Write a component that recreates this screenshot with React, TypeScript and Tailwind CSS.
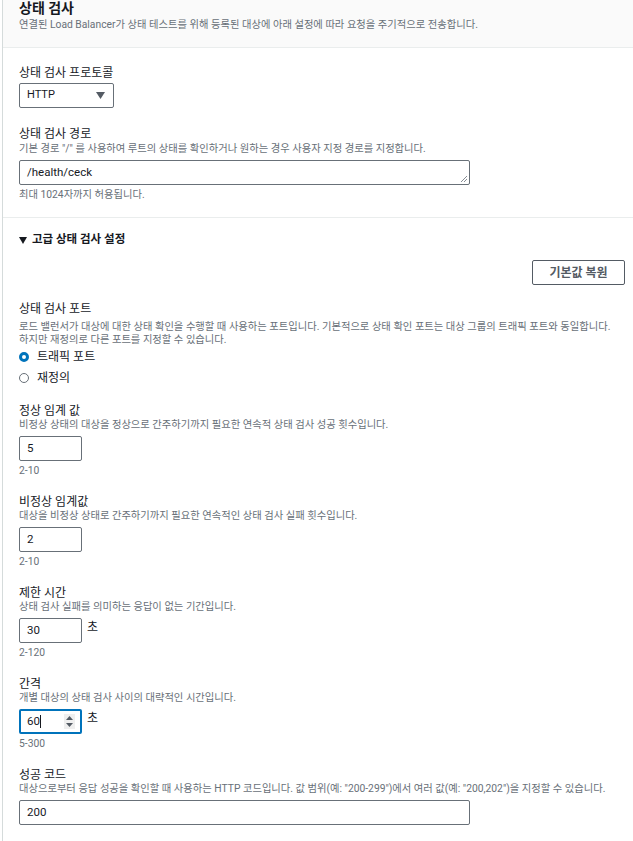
import React from 'react';

// ── 공통 스타일 ───────────────────────────────────────────────────────────────

const label = 'text-[12px] leading-[14px] text-[#16191f]';
const desc = 'text-[10.3px] leading-[13px] text-[#687078]';
const box = 'h-[25px] border border-[#687078] rounded-[2px] flex items-center px-[7px] text-[11.5px] text-[#16191f] bg-white';

function Field({
  title,
  help,
  hint,
  children,
  className = '',
}: {
  title: string;
  help: string;
  hint?: string;
  children: React.ReactNode;
  className?: string;
}) {
  return (
    <div className={className}>
      <p className={label}>{title}</p>
      <p className={desc}>{help}</p>
      <div className="mt-[5px] flex items-start gap-[5px]">{children}</div>
      {hint && <p className={`${desc} mt-[3px]`}>{hint}</p>}
    </div>
  );
}

function Radio({ checked, text }: { checked?: boolean; text: string }) {
  return (
    <div className="flex items-center h-[18px] gap-[8px]">
      {checked ? (
        <span className="w-[10px] h-[10px] rounded-full border-[3px] border-[#0073bb] bg-white" />
      ) : (
        <span className="w-[10px] h-[10px] rounded-full border border-[#687078] bg-white" />
      )}
      <span className="text-[12px] text-[#16191f]">{text}</span>
    </div>
  );
}

export default function App() {
  return (
    <div className="min-h-screen bg-white pl-[2px] font-[Roboto,'Noto_Sans_CJK_KR',sans-serif]">
      <div className="border-l border-[#d5dbdb] min-h-[841px]">
        {/* 헤더 */}
        <header className="bg-[#fafafa] border-b border-[#eaeded] px-[16px] pb-[16px]">
          <h1 className="text-[14px] leading-[16px] font-bold text-[#16191f]">상태 검사</h1>
          <p className={`${desc} mt-[2px] text-[#545b64]`}>
            연결된 Load Balancer가 상태 테스트를 위해 등록된 대상에 아래 설정에 따라 요청을 주기적으로 전송합니다.
          </p>
        </header>

        {/* 프로토콜 / 경로 */}
        <section className="px-[16px] pt-[18px] pb-[16px] border-b border-[#eaeded]">
          <p className={label}>상태 검사 프로토콜</p>
          <div className={`${box} mt-[3px] w-[95px] justify-between pr-[8px]`}>
            <span className="text-[11px]">HTTP</span>
            <svg width="9" height="7" viewBox="0 0 9 7">
              <polygon points="0,0 9,0 4.5,7" fill="#545b64" />
            </svg>
          </div>

          <p className={`${label} mt-[19px]`}>상태 검사 경로</p>
          <p className={`${desc} mt-[1px]`}>
            기본 경로 "/" 를 사용하여 루트의 상태를 확인하거나 원하는 경우 사용자 지정 경로를 지정합니다.
          </p>
          <div className={`${box} mt-[5px] w-[451px] relative`}>
            <span>/health/ceck</span>
            <svg className="absolute right-[1px] bottom-[1px]" width="8" height="8" viewBox="0 0 8 8">
              <line x1="1" y1="7" x2="7" y2="1" stroke="#687078" strokeWidth="0.8" />
              <line x1="4" y1="7" x2="7" y2="4" stroke="#687078" strokeWidth="0.8" />
            </svg>
          </div>
          <p className={`${desc} mt-[3px]`}>최대 1024자까지 허용됩니다.</p>
        </section>

        {/* 고급 설정 */}
        <section className="pl-[16px] pr-[8px] pt-[15px]">
          <div className="flex items-center gap-[5px] h-[14px]">
            <svg width="8" height="7" viewBox="0 0 8 7">
              <polygon points="0,0 8,0 4,7" fill="#16191f" />
            </svg>
            <span className="text-[11.5px] font-bold text-[#16191f]">고급 상태 검사 설정</span>
          </div>

          <div className="flex justify-end mt-[13px]">
            <button className="h-[25px] w-[93px] border border-[#545b64] rounded-[2px] text-[12px] font-bold text-[#545b64] bg-white">
              기본값 복원
            </button>
          </div>

          <p className={`${label} mt-[17px]`}>상태 검사 포트</p>
          <p className={`${desc} mt-[4px]`}>
            로드 밸런서가 대상에 대한 상태 확인을 수행할 때 사용하는 포트입니다. 기본적으로 상태 확인 포트는 대상 그룹의 트래픽 포트와 동일합니다.
            <br />
            하지만 재정의로 다른 포트를 지정할 수 있습니다.
          </p>
          <div className="mt-[2px] flex flex-col gap-[3px]">
            <Radio checked text="트래픽 포트" />
            <Radio text="재정의" />
          </div>

          <Field className="mt-[17px]" title="정상 임계 값" help="비정상 상태의 대상을 정상으로 간주하기까지 필요한 연속적 상태 검사 성공 횟수입니다." hint="2-10">
            <div className={`${box} w-[63px]`}>5</div>
          </Field>

          <Field className="mt-[18px]" title="비정상 임계값" help="대상을 비정상 상태로 간주하기까지 필요한 연속적인 상태 검사 실패 횟수입니다." hint="2-10">
            <div className={`${box} w-[63px]`}>2</div>
          </Field>

          <Field className="mt-[18px]" title="제한 시간" help="상태 검사 실패를 의미하는 응답이 없는 기간입니다." hint="2-120">
            <div className={`${box} w-[63px]`}>30</div>
            <span className="text-[12px] text-[#16191f] leading-[14px] mt-[2px]">초</span>
          </Field>

          <Field className="mt-[18px]" title="간격" help="개별 대상의 상태 검사 사이의 대략적인 시간입니다." hint="5-300">
            <div className="h-[25px] w-[63px] border-2 border-[#0073bb] rounded-[2px] flex items-center pl-[6px] pr-[5px] text-[11.5px] text-[#16191f] bg-white">
              <span>60</span>
              <span className="w-px h-[13px] bg-[#16191f]" />
              <span className="ml-auto w-[11px] h-[15px] bg-[#efefef] flex items-center justify-center">
                <svg width="7" height="11" viewBox="0 0 7 11">
                  <polygon points="3.5,0 7,4 0,4" fill="#545b64" />
                  <polygon points="0,7 7,7 3.5,11" fill="#545b64" />
                </svg>
              </span>
            </div>
            <span className="text-[12px] text-[#16191f] leading-[14px] mt-[2px]">초</span>
          </Field>

          <Field className="mt-[18px]" title="성공 코드" help={'대상으로부터 응답 성공을 확인할 때 사용하는 HTTP 코드입니다. 값 범위(예: "200-299")에서 여러 값(예: "200,202")을 지정할 수 있습니다.'}>
            <div className={`${box} w-[451px]`}>200</div>
          </Field>
        </section>
      </div>
    </div>
  );
}
